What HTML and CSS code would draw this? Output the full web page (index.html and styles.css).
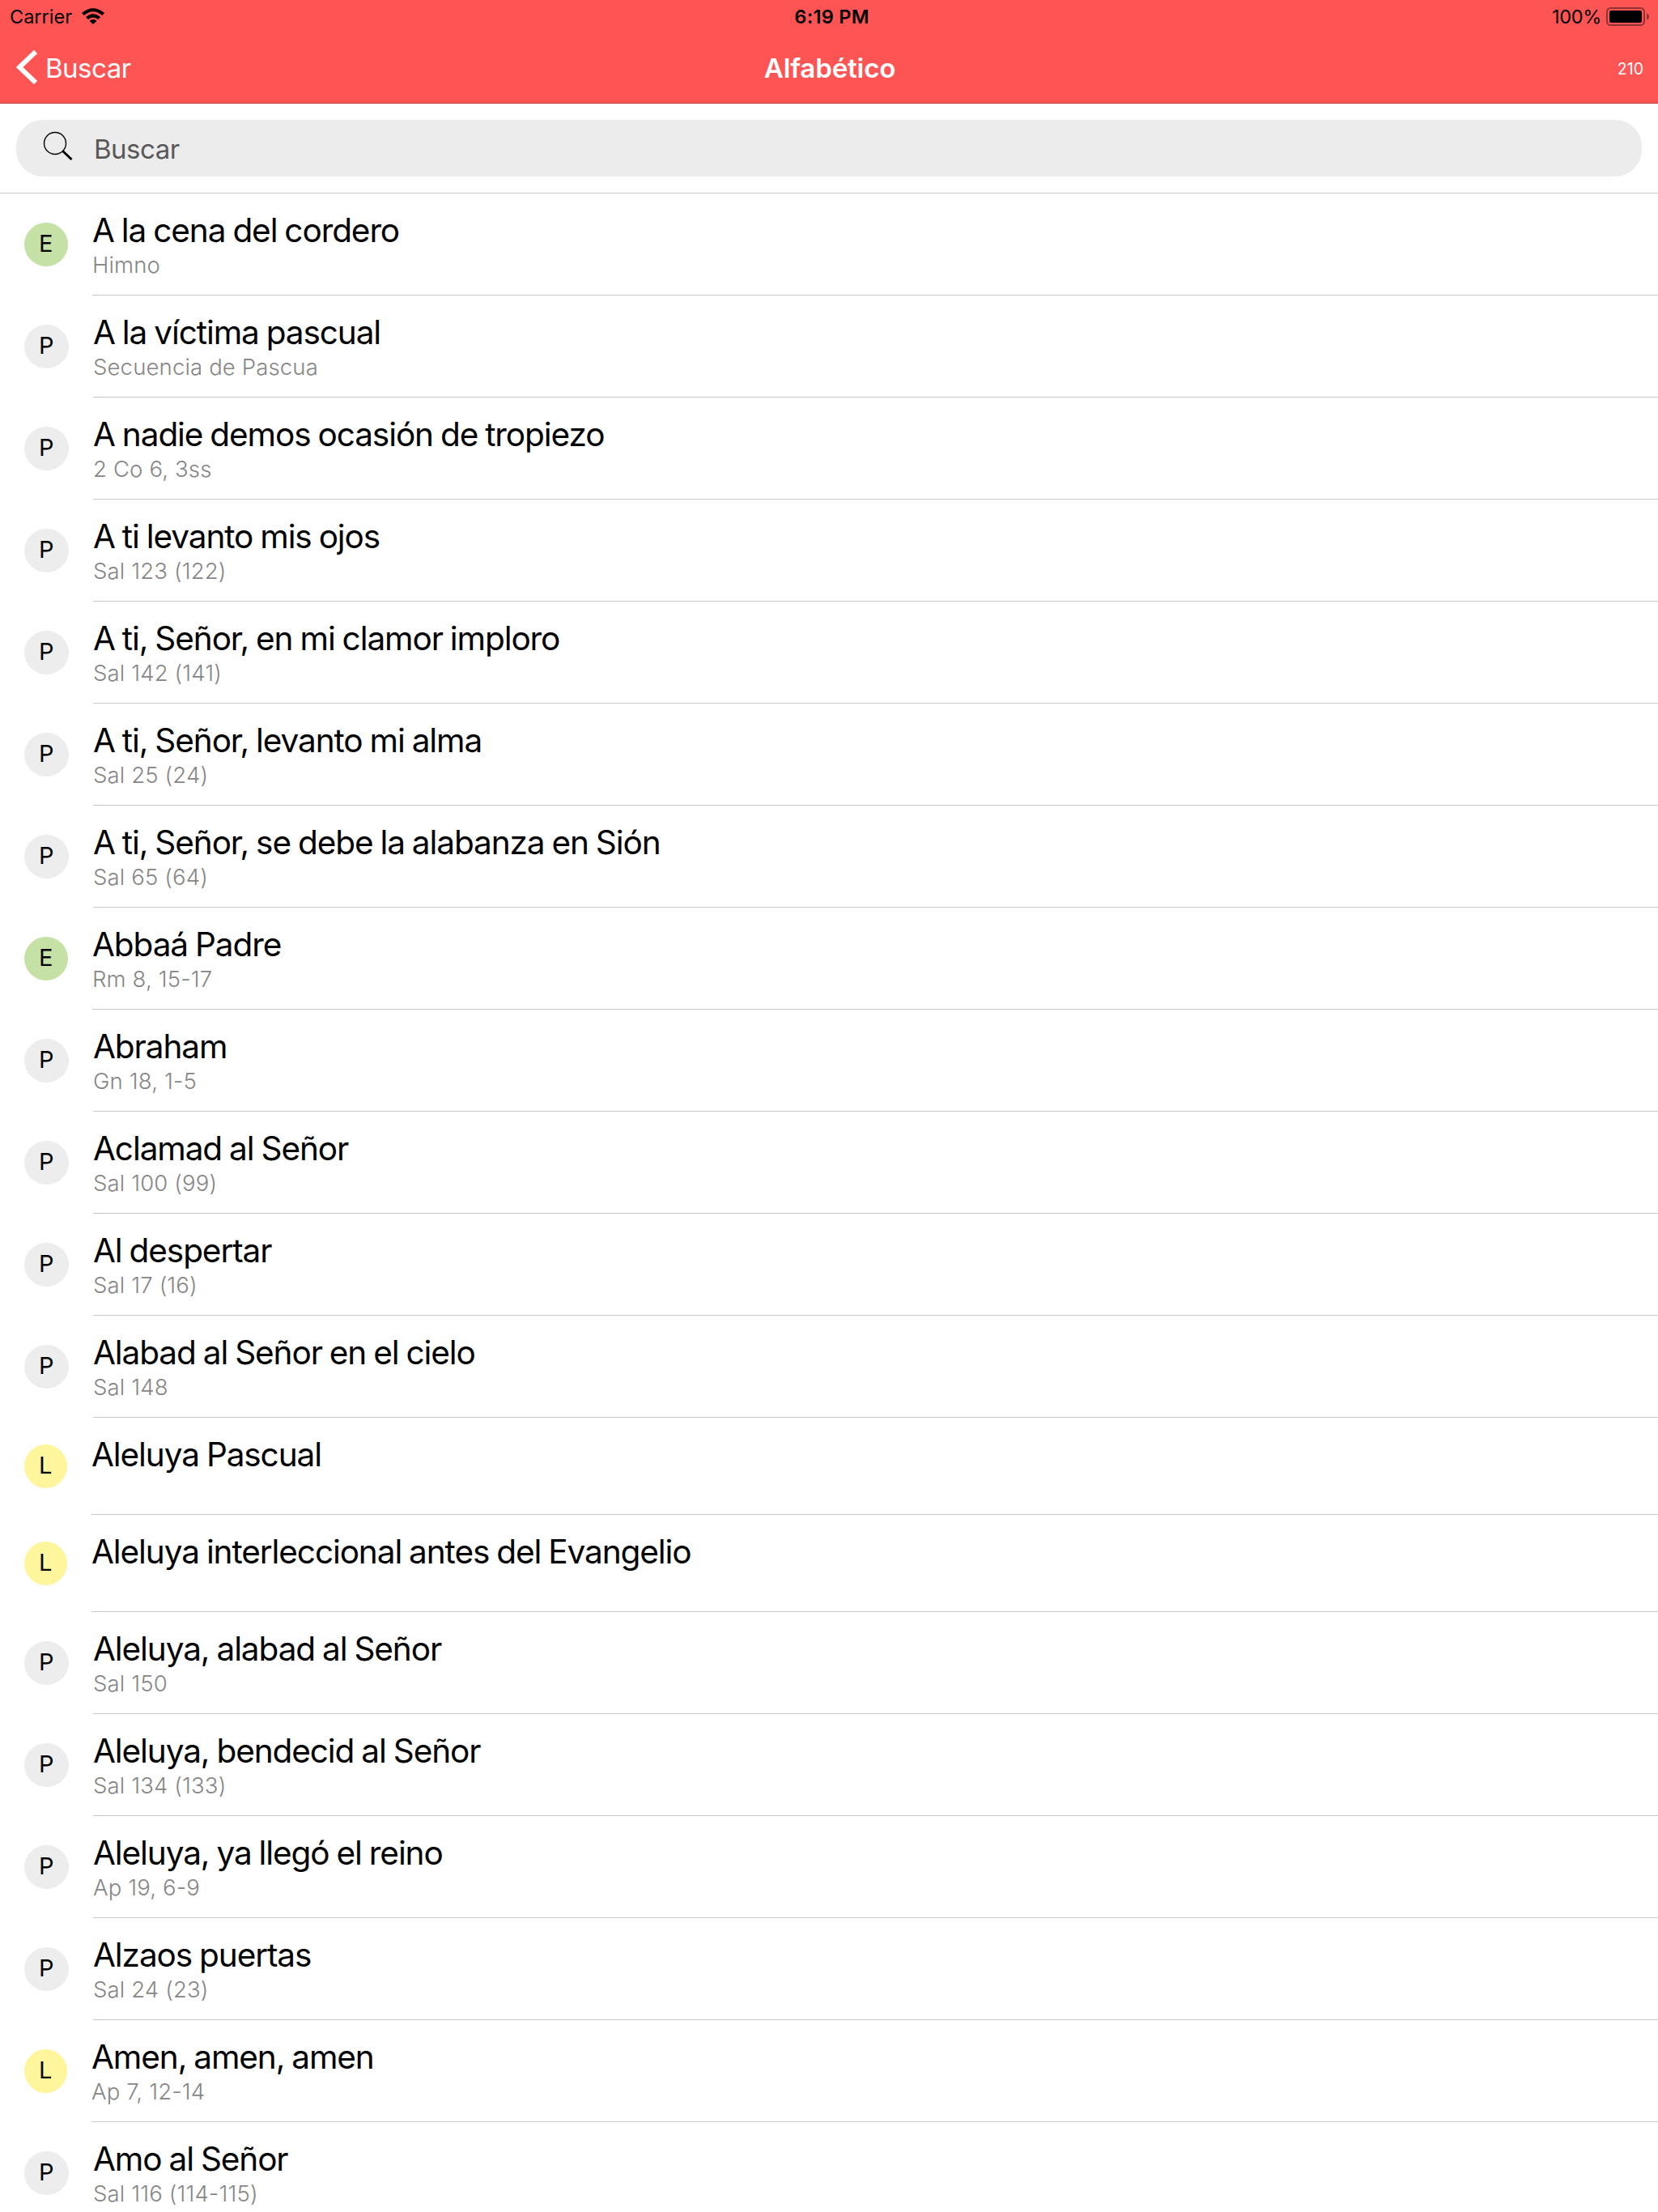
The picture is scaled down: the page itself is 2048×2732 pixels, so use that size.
FILE: index.html
```html
<!DOCTYPE html>
<html lang="es">
<head>
<meta charset="utf-8">
<title>Alfabético</title>
<link rel="stylesheet" href="styles.css">
</head>
<body>
<header class="header">
  <div class="status">
    <div class="status-left"><span class="carrier">Carrier</span>
      <svg class="wifi" viewBox="0 0 28 20" width="28" height="20"><path d="M0 5.9Q14-5.6 28 5.9L25.2 8.9Q14-.5 2.8 8.9Z"/><path d="M4.9 11Q14 3.3 23.1 11L20.2 14Q14 9 7.8 14Z"/><path d="M9.4 15.8Q14 12.2 18.6 15.8L14 20Z"/></svg>
    </div>
    <span class="clock">6:19 PM</span>
    <div class="status-right"><span class="percent">100%</span>
      <svg class="battery" viewBox="0 0 54 24" width="54" height="24"><rect x="1" y="1" width="46" height="21" rx="4.5" fill="none" stroke="#8f3434" stroke-width="2"/><rect x="4" y="4" width="40" height="15" rx="2"/><path d="M50 7.5Q53 8.5 53 11.5T50 15.5Z" fill="#8f3434"/></svg>
    </div>
  </div>
  <nav class="nav">
    <a class="back"><svg viewBox="0 0 26 42" width="26" height="42"><path d="M24 2L4 21L24 40" fill="none" stroke="#fff" stroke-width="6"/></svg><span class="back-label">Buscar</span></a>
    <h1 class="nav-title">Alfabético</h1>
    <span class="count">210</span>
  </nav>
</header>
<div class="search-bar">
  <div class="search">
    <svg class="search-icon" viewBox="0 0 38 38" width="38" height="38"><circle cx="15" cy="15" r="13.5" fill="none" stroke="#000" stroke-width="1.4"/><path d="M24.5 24.5L35.5 35" stroke="#000" stroke-width="3"/></svg>
    <span class="placeholder">Buscar</span>
  </div>
</div>
<ul class="list" id="list"></ul>
<script src="songs.js"></script>
</body>
</html>
```
FILE: songs.js
```js
const songs = [
  ["E", "A la cena del cordero", "Himno"],
  ["P", "A la víctima pascual", "Secuencia de Pascua"],
  ["P", "A nadie demos ocasión de tropiezo", "2 Co 6, 3ss"],
  ["P", "A ti levanto mis ojos", "Sal 123 (122)"],
  ["P", "A ti, Señor, en mi clamor imploro", "Sal 142 (141)"],
  ["P", "A ti, Señor, levanto mi alma", "Sal 25 (24)"],
  ["P", "A ti, Señor, se debe la alabanza en Sión", "Sal 65 (64)"],
  ["E", "Abbaá Padre", "Rm 8, 15-17"],
  ["P", "Abraham", "Gn 18, 1-5"],
  ["P", "Aclamad al Señor", "Sal 100 (99)"],
  ["P", "Al despertar", "Sal 17 (16)"],
  ["P", "Alabad al Señor en el cielo", "Sal 148"],
  ["L", "Aleluya Pascual", ""],
  ["L", "Aleluya interleccional antes del Evangelio", ""],
  ["P", "Aleluya, alabad al Señor", "Sal 150"],
  ["P", "Aleluya, bendecid al Señor", "Sal 134 (133)"],
  ["P", "Aleluya, ya llegó el reino", "Ap 19, 6-9"],
  ["P", "Alzaos puertas", "Sal 24 (23)"],
  ["L", "Amen, amen, amen", "Ap 7, 12-14"],
  ["P", "Amo al Señor", "Sal 116 (114-115)"]
];

document.getElementById("list").innerHTML = songs.map(([stage, title, source]) => `
  <li class="row stage-${stage}${source ? "" : " short"}">
    <span class="badge">${stage}</span>
    <div class="body">
      <span class="title">${title}</span>
      ${source ? `<span class="source">${source}</span>` : ""}
    </div>
  </li>`).join("");
```
FILE: styles.css
```css
* { box-sizing: border-box; margin: 0; padding: 0; }
body { width: 2048px; height: 2732px; overflow: hidden; background: #fff; color: #000; font-family: Inter, "Liberation Sans", sans-serif; }
svg { display: block; flex: none; }

.header { height: 128px; background: #ff5454; border-bottom: 1px solid #b73c3c; }
.status { display: grid; grid-template-columns: 1fr auto 1fr; height: 40px; padding: 0 10px 0 12px; line-height: 42px; font-size: 23.5px; }
.status-left, .status-right { display: flex; align-items: flex-start; }
.status-right { justify-content: flex-end; }
.wifi { margin: 10px 0 0 12px; }
.battery { margin: 9px 0 0 6px; }
.percent { letter-spacing: -.3px; }
.clock { padding-left: 5px; font-weight: 600; letter-spacing: .3px; }

.nav { display: grid; grid-template-columns: 1fr auto 1fr; height: 87px; padding: 0 18px 0 20px; }
.back { display: flex; align-items: flex-start; padding-top: 22px; color: #fff; }
.back-label { margin: 2px 0 0 10px; font-size: 33px; line-height: 40px; letter-spacing: -.5px; }
.nav-title { padding-top: 24px; font-size: 33px; line-height: 40px; font-weight: 600; letter-spacing: -.1px; color: #fff; }
.count { justify-self: end; padding-top: 30px; font-size: 19.5px; line-height: 30px; color: #fff; }

.search-bar { height: 111px; padding: 20px; border-bottom: 1px solid #c8c8c8; }
.search { display: flex; align-items: flex-start; height: 70px; border-radius: 33px; background: #ececec; padding: 14px 33px 0; }
.placeholder { margin: 2px 0 0 25px; font-size: 33px; line-height: 40px; letter-spacing: -.5px; color: #595959; }

.list { list-style: none; }
.row { display: flex; height: 126px; padding-left: 30px; gap: 30px; }
.row.short { height: 120px; }
.badge { flex: none; width: 55px; height: 54px; margin-top: 36px; padding-left: 18px; border-radius: 50%; font-size: 29px; line-height: 51px; background: #ededed; }
.short .badge { margin-top: 33px; }
.stage-E .badge { width: 54px; background: #c5e1a5; }
.stage-L .badge { width: 53px; background: #fff59d; }
.body { flex: 1; display: flex; flex-direction: column; align-items: flex-start; padding-top: 21px; border-bottom: 1px solid #c8c8c8; }
.title { font-size: 40.5px; line-height: 50px; letter-spacing: -1.08px; word-spacing: -1.3px; white-space: nowrap; }
.source { font-size: 27.5px; line-height: 34px; font-weight: 300; letter-spacing: .15px; color: #868686; white-space: nowrap; }
```
